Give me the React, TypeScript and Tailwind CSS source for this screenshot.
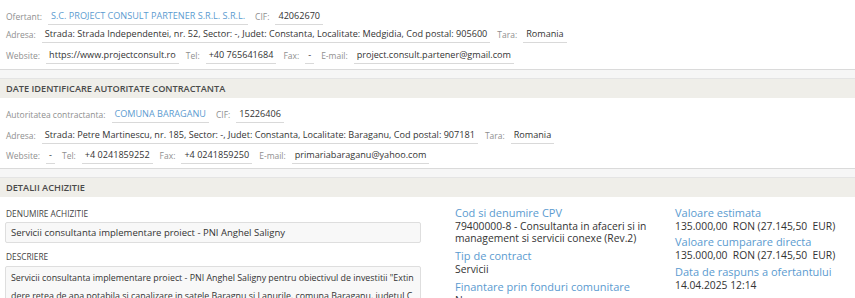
import React from "react";

const L = ({ children }: { children: React.ReactNode }) => (
  <span className="text-[#8f8f8f] text-[8.5px] mr-[6px]">{children}</span>
);
const V = ({ children, blue }: { children: React.ReactNode; blue?: boolean }) => (
  <span
    className={`px-[3px] pb-[1px] border-b border-[#d9d9d9] mr-[7px] ${blue ? "text-[#5b9bd0]" : "text-[#333]"}`}
  >
    {children}
  </span>
);

const Row = ({ children, cls }: { children: React.ReactNode; cls: string }) => (
  <div className={`flex items-center h-[18px] px-[6px] whitespace-nowrap ${cls}`}>{children}</div>
);

const Sep = ({ title }: { title: string }) => (
  <div>
    <div className="h-[10px] border-t border-b border-t-[#dadada] border-b-[#e4e4e4] bg-[#f6f6f6]" />
    <div className="h-[19px] bg-[#efeee9] flex items-center px-[6px] font-semibold text-[9.2px] text-[#4a4a4a]">
      {title}
    </div>
  </div>
);

export default function App() {
  return (
    <div
      className="w-[855px] h-[298px] overflow-hidden bg-white text-[9.1px]"
      style={{ fontFamily: "'Open Sans', 'Noto Sans', sans-serif" }}
    >
      <div className="pt-[8px] pb-[4px]">
        <Row cls="">
          <L>Ofertant:</L>
          <V blue>S.C. PROJECT CONSULT PARTENER S.R.L. S.R.L.</V>
          <L>CIF:</L>
          <V>42062670</V>
        </Row>
        <Row cls="">
          <L>Adresa:</L>
          <V>Strada: Strada Independentei, nr. 52, Sector: -, Judet: Constanta, Localitate: Medgidia, Cod postal: 905600</V>
          <L>Tara:</L>
          <V>Romania</V>
        </Row>
        <Row cls="mt-[3px]">
          <L>Website:</L>
          <V>https://www.projectconsult.ro</V>
          <L>Tel:</L>
          <V>+40 765641684</V>
          <L>Fax:</L>
          <V>-</V>
          <L>E-mail:</L>
          <V>project.consult.partener@gmail.com</V>
        </Row>
      </div>
      <Sep title="DATE IDENTIFICARE AUTORITATE CONTRACTANTA" />
      <div className="pt-[8px] pb-[3px]">
        <Row cls="">
          <L>Autoritatea contractanta:</L>
          <V blue>COMUNA BARAGANU</V>
          <L>CIF:</L>
          <V>15226406</V>
        </Row>
        <Row cls="mt-[3px]">
          <L>Adresa:</L>
          <V>Strada: Petre Martinescu, nr. 185, Sector: -, Judet: Constanta, Localitate: Baraganu, Cod postal: 907181</V>
          <L>Tara:</L>
          <V>Romania</V>
        </Row>
        <Row cls="mt-[2px]">
          <L>Website:</L>
          <V>-</V>
          <L>Tel:</L>
          <V>+4 0241859252</V>
          <L>Fax:</L>
          <V>+4 0241859250</V>
          <L>E-mail:</L>
          <V>primariabaraganu@yahoo.com</V>
        </Row>
      </div>
      <Sep title="DETALII ACHIZITIE" />
      <div className="flex pt-[9px]">
        <div className="w-[416px] ml-[5px] text-[9.5px]">
          <div className="text-[8.3px] text-[#444] pl-[1px] mt-[2px]">DENUMIRE ACHIZITIE</div>
          <div className="mt-[2px] h-[21px] border border-[#dedede] rounded-[2px] bg-[#f8f8f8] px-[5px] flex items-center text-[#333]">
            Servicii consultanta implementare proiect - PNI Anghel Saligny
          </div>
          <div className="mt-[8px] text-[8.3px] text-[#444] pl-[1px]">DESCRIERE</div>
          <div className="mt-[2px] border border-[#dedede] rounded-[2px] bg-[#f8f8f8] px-[5px] pt-[2px] leading-[18px] text-[8.85px] text-[#333] break-all h-[60px]">
            Servicii consultanta implementare proiect - PNI Anghel Saligny pentru obiectivul de investitii "Extindere retea de apa potabila si canalizare in satele Baragnu si Lanurile, comuna Baraganu, judetul Constanta"
          </div>
        </div>
        <div className="ml-[34px] w-[220px] text-[#333] text-[10.3px]">
          <div className="text-[11px] text-[#5b9bd0] leading-[14px]">Cod si denumire CPV</div>
          <div className="leading-[12px]">79400000-8 - Consultanta in afaceri si in management si servicii conexe (Rev.2)</div>
          <div className="mt-[5px] text-[11px] text-[#5b9bd0] leading-[14px]">Tip de contract</div>
          <div className="leading-[12px]">Servicii</div>
          <div className="mt-[5px] text-[11px] text-[#5b9bd0] leading-[14px]">Finantare prin fonduri comunitare</div>
          <div className="leading-[12px]">Nu</div>
        </div>
        <div className="text-[#333] text-[10.3px]">
          <div className="text-[11px] text-[#5b9bd0] leading-[14px]">Valoare estimata</div>
          <div className="leading-[12px] whitespace-pre">135.000,00  RON (27.145,50  EUR)</div>
          <div className="mt-[3px] text-[11px] text-[#5b9bd0] leading-[14px]">Valoare cumparare directa</div>
          <div className="leading-[12px] whitespace-pre">135.000,00  RON (27.145,50  EUR)</div>
          <div className="mt-[4px] text-[11px] text-[#5b9bd0] leading-[14px]">Data de raspuns a ofertantului</div>
          <div className="leading-[12px]">14.04.2025 12:14</div>
        </div>
      </div>
    </div>
  );
}
